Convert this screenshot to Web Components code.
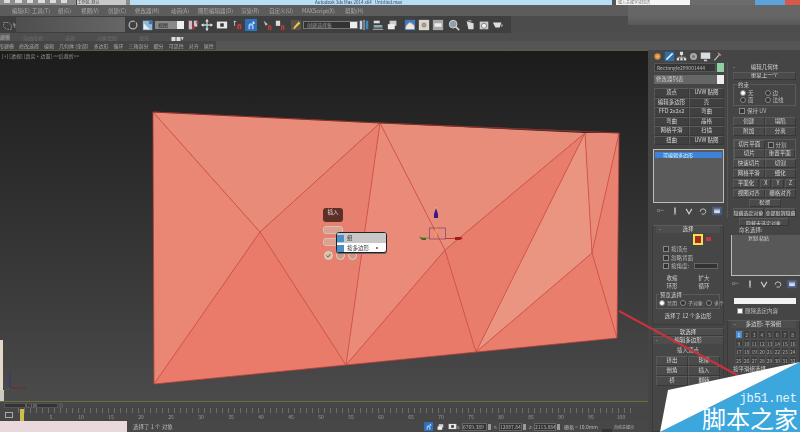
<!DOCTYPE html>
<html>
<head>
<meta charset="utf-8">
<title>3ds Max</title>
<style>
    html, body { margin: 0; padding: 0; background: #444; }
    body { width: 800px; height: 432px; overflow: hidden; font-family: "Noto Sans CJK SC", "Liberation Sans", sans-serif; color: #cfcfcf; }
    max-app { filter: blur(.35px); }
</style>
</head>
<body>
<max-app></max-app>
<jb-mark></jb-mark>

<script>
const ICONS = {
    lasso: `<path d="M2 4h6l3 3v5H5L2 9z" fill="none" stroke="#9a9a9a" stroke-dasharray="2 1"/>`,
    cursor: `<path d="M4 2l5 5-2 1 1 4-2 0-1-4-1 1z" fill="#888"/>`,
    ring: `<circle cx="7" cy="7" r="4.5" fill="none" stroke="#aaa" stroke-width="1.6"/><path d="M9 1l3 2-3 2z" fill="#444"/>`,
    blueL: `<rect x="1" y="2" width="11" height="11" fill="#8fb8d8"/><path d="M2 12V5l7 7z" fill="#e8eef2"/><rect x="8" y="2" width="4" height="4" fill="#3a7ab8"/>`,
    mirror: `<rect x="2" y="2" width="4" height="10" fill="#d8b8c8"/><rect x="8" y="2" width="4" height="7" fill="#c8c8d8"/><rect x="6" y="8" width="3" height="4" fill="#b8323a"/><circle cx="12" cy="4" r="1.4" fill="#c83a3a"/>`,
    move: `<path d="M7 1v12M1 7h12" stroke="#b8d0d8" stroke-width="1.6"/><path d="M7 0l2 3H5zM7 14l2-3H5zM0 7l3-2v4zM14 7l-3-2v4z" fill="#d8e4e8"/>`,
    view: `<rect x="1" y="3" width="12" height="8" fill="#e8e8e8"/><rect x="5" y="5" width="4" height="4" fill="#333"/>`,
    snap: `<path d="M2 3h3M3 2v6" stroke="#ccc"/><path d="M6 12V8a2.5 2.5 0 015 0v4h-2V8h-1v4z" fill="#c23a3a"/>`,
    snapB: `<rect x="0" y="0" width="14" height="14" fill="#2f6fc0"/><path d="M4 12V8a3 3 0 016 0v4H8V8H6v4z" fill="#9ac8ee"/><path d="M9 2l3 3-3 1z" fill="#dfeefa"/>`,
    snapA: `<path d="M2 2l5 4-3 2z" fill="#bbb"/><path d="M7 13V9a2 2 0 014 0v4h-1.5V9h-1v4z" fill="#c23a3a"/>`,
    snapC: `<rect x="1" y="2" width="5" height="6" fill="#ddd"/><path d="M7 13V9a2 2 0 014 0v4h-1.5V9h-1v4z" fill="#c23a3a"/>`,
    pencil: `<rect x="1" y="1" width="12" height="12" fill="#56534a"/><path d="M3 11l7-8 2 2-7 7z" fill="#e8c84a"/><path d="M3 11l1-2 1 2z" fill="#c03a3a"/>`,
    mirrorB: `<rect x="2" y="2" width="3" height="10" fill="#bcd8e8"/><rect x="9" y="2" width="3" height="10" fill="#3a8ac0"/><path d="M7 1v12" stroke="#ddd"/>`,
    align: `<rect x="2" y="2" width="7" height="3" fill="#ddd"/><rect x="2" y="7" width="10" height="3" fill="#8ab"/><path d="M1 12h12" stroke="#ccc"/>`,
    layers: `<rect x="3" y="2" width="8" height="6" fill="#ccc"/><rect x="1" y="6" width="8" height="6" fill="#eee"/>`,
    curve: `<rect x="1" y="1" width="12" height="12" fill="#3c7cc4"/><path d="M2 10c3-7 6-7 10-2v4H2z" fill="#f0e8dc"/><path d="M2 9c3-6 6-6 10-1" stroke="#d8a080" fill="none"/>`,
    mat1: `<rect x="1" y="1" width="12" height="12" fill="#d8d8d0"/><circle cx="7" cy="7" r="3" fill="#a89880"/>`,
    mat2: `<rect x="1" y="1" width="12" height="12" fill="#aaa"/><rect x="3" y="5" width="8" height="4" fill="#eee"/>`,
    mag: `<circle cx="6" cy="6" r="4.5" fill="#8e9eae" stroke="#ddd"/><path d="M9 9l4 4" stroke="#ccc" stroke-width="2"/>`,
    kettle1: `<path d="M2 3l8 2v7H4z" fill="#ddd"/><path d="M1 3l5-2 3 2z" fill="#999"/>`,
    kettle2: `<rect x="2" y="3" width="10" height="9" fill="#ccc"/><circle cx="7" cy="8" r="3" fill="#eee" stroke="#777"/>`,
    kettle3: `<path d="M1 4h10l-2 6H4z" fill="#ddd"/><path d="M11 6l2 1-2 3z" fill="#bbb"/>`,
    sun: `<circle cx="7" cy="7" r="4" fill="#d88a40"/><circle cx="7" cy="7" r="2" fill="#e8b070"/>`,
    modify: `<rect x="1" y="1" width="12" height="12" fill="#2f6fa8"/><path d="M3 11L11 3" stroke="#dfeef8" stroke-width="2"/>`,
    tree: `<rect x="5" y="1" width="4" height="4" fill="#ddd"/><rect x="1" y="9" width="3" height="3" fill="#ddd"/><rect x="5.5" y="9" width="3" height="3" fill="#ddd"/><rect x="10" y="9" width="3" height="3" fill="#ddd"/><path d="M7 5v2M2 8h10" stroke="#ccc"/>`,
    disc: `<circle cx="7" cy="7" r="4.5" fill="#aaa"/><circle cx="7" cy="7" r="2" fill="#777"/>`,
    screen: `<rect x="1" y="2" width="12" height="8" fill="#ddd"/><path d="M5 12h4" stroke="#ccc" stroke-width="2"/>`,
    hammer: `<path d="M3 12l7-8" stroke="#bbb" stroke-width="1.6"/><path d="M8 2l4 3-1 1-4-3z" fill="#c8a070"/>`,
    pin: `<path d="M2 5h3v3H2zM5 6h6" stroke="#888" fill="none"/>`,
    bar: `<path d="M7 2v9" stroke="#ccc" stroke-width="2"/><path d="M5 12h4" stroke="#888"/>`,
    vv: `<path d="M3 4l4 7 4-7" stroke="#ccc" stroke-width="1.6" fill="none"/>`,
    bin: `<path d="M3 8a4 4 0 118 0 4 4 0 01-6 3" stroke="#bbb" stroke-width="1.4" fill="none"/>`,
    cfg: `<rect x="0" y="1" width="14" height="12" rx="2" fill="#4a5c86"/><rect x="3" y="4" width="8" height="6" fill="#d8dce6"/><rect x="3" y="4" width="8" height="2" fill="#8a94ac"/>`,
    check: `<path d="M3 7l3 3 5-6" stroke="#5a6a3a" stroke-width="2" fill="none"/>`
};

class MaxIcon extends HTMLElement {
    connectedCallback() {
        const size = this.getAttribute('size') || 12;
        this.attachShadow({mode: 'open'}).innerHTML = `
        <style>
            :host { display: inline-flex; flex: none; width: ${size}px; height: ${size}px; }
            svg { width: 100%; height: 100%; display: block; }
        </style>
        <svg viewBox="0 0 14 14">${ICONS[this.getAttribute('name')] || ''}</svg>`;
    }
}
customElements.define('max-icon', MaxIcon);

class MaxBtn extends HTMLElement {
    constructor() {
        super();
        this.attachShadow({mode: 'open'}).innerHTML = `
        <style>
            :host {
                display: flex; align-items: center; justify-content: center;
                box-sizing: border-box; min-width: 0; height: 100%;
                background: #4a4a4a; border: 1px solid #383838;
                border-top-color: #5c5c5c; border-left-color: #585858;
                font-size: 5.5px; line-height: 1; color: #d4d4d4; white-space: nowrap; overflow: hidden;
            }
        </style>
        <slot></slot>`;
    }
}
customElements.define('max-btn', MaxBtn);

class MaxTitlebar extends HTMLElement {
    constructor() {
        super();
        this.attachShadow({mode: 'open'}).innerHTML = `
        <style>
            :host { display: flex; height: 5px; overflow: hidden; background: #b8def6; font-size: 4.5px; line-height: 5px; color: #30465c; }
            .quick { width: 130px; flex: none; background: #8b8b8b; display: flex; gap: 5px; padding: 0 4px; box-sizing: border-box; align-items: flex-start; }
            .quick i { width: 7px; height: 3px; background: #dcdcdc; }
            .box { width: 53px; height: 5px; margin-left: 4px; background: #c8c8c8; border-left: 1px solid #444; color: #444; font-size: 4px; line-height: 5px; white-space: nowrap; }
            .middle { flex: 1; min-width: 0; padding-left: 185px; white-space: nowrap; }
            .search { width: 78px; flex: none; background: #f4f4f4; color: #777; font-size: 4px; line-height: 5px; padding-left: 2px; box-sizing: border-box; border-left: 4px solid #555; }
            .tools { width: 65px; flex: none; background: #6c6c6c; }
            .min { width: 30px; flex: none; background: #5ba3dc; }
            .close { width: 15px; flex: none; background: #d8584a; }
        </style>
        <div class="quick"><i></i><i></i><i></i><i></i><i></i><i></i><div class="box">工作区: 默认</div></div>
        <div class="middle">Autodesk 3ds Max 2014 x64 &nbsp; Untitled.max</div>
        <div class="search">键入关键字或短语</div>
        <div class="tools"></div>
        <div class="min"></div>
        <div class="close"></div>`;
    }
}
customElements.define('max-titlebar', MaxTitlebar);

class MaxMenubar extends HTMLElement {
    constructor() {
        super();
        const items = [['编辑(E)', 20], ['工具(T)', 26], ['组(G)', 23], ['视图(V)', 27], ['创建(C)', 27], ['修改器(M)', 36], ['动画(A)', 27], ['图形编辑器(D)', 43], ['渲染(R)', 28], ['自定义(U)', 33], ['MAXScript(X)', 43], ['帮助(H)', 24]];
        this.attachShadow({mode: 'open'}).innerHTML = `
        <style>
            :host {
                display: flex; height: 11px; align-items: center; padding-left: 12px;
                background: linear-gradient(90deg, #5c5c5c 628px, #666 628px);
                font-size: 5.5px; color: #a8a8a8; white-space: nowrap;
            }
            span { flex: none; }
        </style>
        ${items.map(i => `<span style="width:${i[1]}px">${i[0]}</span>`).join('')}`;
    }
}
customElements.define('max-menubar', MaxMenubar);

class MaxToolbar extends HTMLElement {
    constructor() {
        super();
        const list = [
            ['ring', 2], ['blueL', 3], 'dd1', ['mirror', 3], ['move', 2], ['view', 3], ['snap', 4], ['snapB', 1],
            ['snapA', 5], ['snapC', 1], ['pencil', 3], 'dd2', ['mirrorB', 0], ['align', 2], ['layers', 3],
            ['curve', 5], ['mat1', 2], ['mat2', 2], ['mag', 4], ['kettle1', 5], ['kettle2', 1], ['kettle3', 2]
        ];
        const html = list.map(item => {
            if (item === 'dd1') return `<div class="dd" style="width:29px;margin-left:1px"><span>视图</span><b></b></div>`;
            if (item === 'dd2') return `<div class="dd dark" style="width:55px;margin-left:1px"><span>创建选择集</span><b></b></div>`;
            return `<max-icon name="${item[0]}" style="margin-left:${item[1]}px"></max-icon>`;
        }).join('');
        this.attachShadow({mode: 'open'}).innerHTML = `
        <style>
            :host {
                display: flex; height: 17px; align-items: center;
                background: linear-gradient(#666, #585858) 628px 0 / 172px 9px no-repeat, #4c4c4c;
            }
            .left { display: flex; align-items: center; width: 511px; height: 100%; background: #3f3f3f; flex: none; }
            .gray { width: 109px; height: 15px; background: linear-gradient(90deg, #4e4e4e, #666); flex: none; margin-left: -3px; }
            .dd { height: 8px; box-sizing: border-box; background: #888; color: #222; font-size: 5px; line-height: 8px; display: flex; justify-content: space-between; padding-left: 3px; flex: none; }
            .dd.dark { background: #333; color: #999; border: 1px solid #777; line-height: 6px; }
            .dd b { width: 7px; background: #eee; }
        </style>
        <div class="left">
            <max-icon name="lasso" style="margin-left:2px"></max-icon>
            <max-icon name="cursor" style="margin-left:-3px;width:8px"></max-icon>
            <div class="gray"></div>
            ${html}
        </div>`;
    }
}
customElements.define('max-toolbar', MaxToolbar);

class MaxRibbon extends HTMLElement {
    constructor() {
        super();
        this.attachShadow({mode: 'open'}).innerHTML = `
        <style>
            :host { display: block; height: 17px; font-size: 5px; white-space: nowrap; background: #555; }
            .tabs { display: flex; height: 8px; align-items: center; background: #4e4e4e; color: #6e6e6e; }
            .tabs span:first-child { width: 10px; height: 8px; background: #5e5e5e; color: #aaa; margin-right: 13px; line-height: 8px; flex: none; }
            .tabs span { margin-right: 22px; }
            .tabs b { color: #ddd; font-size: 5px; }
            .sub { display: flex; gap: 5px; height: 9px; align-items: center; width: 216px; background: #454545; color: #a8a8a8; box-sizing: border-box; overflow: hidden; }
            .sub span:first-child { margin-left: -11px; flex: none; }
        </style>
        <div class="tabs"><span>建模</span><span>自由形式</span><span>选择</span><span>对象绘制</span><span>填充</span><b>■■▾</b></div>
        <div class="sub"><span>多边形建模</span><span>修改选择</span><span>编辑</span><span>几何体 (全部)</span><span>多边形</span><span>循环</span><span>三角剖分</span><span>细分</span><span>可见性</span><span>对齐</span><span>属性</span></div>`;
    }
}
customElements.define('max-ribbon', MaxRibbon);

class QuadMenu extends HTMLElement {
    constructor() {
        super();
        this.attachShadow({mode: 'open'}).innerHTML = `
        <style>
            :host { position: absolute; left: 323px; top: 157px; width: 66px; height: 56px; font-size: 6px; color: #333; }
            .head { width: 20px; height: 14px; border-radius: 3px; background: #5c3028; color: #e8d8d0; font-size: 5.5px; text-align: center; line-height: 8px; }
            .chip { position: absolute; left: 0; width: 20px; height: 8px; border-radius: 3px; background: #dea08f; border: 1px solid #cfc4ba; box-sizing: border-box; }
            .dot { position: absolute; top: 43px; width: 9px; height: 9px; border-radius: 50%; background: #c99a8a; border: 1px solid #ddd2c8; box-sizing: border-box; }
            .dot.ok { background: #d8c0a8; display: flex; }
            .pop { position: absolute; left: 13px; top: 24px; width: 51px; height: 21px; box-sizing: border-box; border: 1px solid #222; border-radius: 3px; background: #fff; overflow: hidden; box-shadow: 0 1px 0 #666; }
            .row { display: flex; align-items: center; gap: 3px; height: 10px; line-height: 10px; font-size: 5.5px; }
            .row:first-child { background: #c8c8c8; }
            .row i { width: 7px; height: 7px; background: #4a90c8; flex: none; }
            .row em { width: 2px; height: 2px; border-radius: 50%; background: #c02040; margin-left: 4px; }
        </style>
        <div class="head">插入</div>
        <div class="chip" style="top:18px"></div>
        <div class="chip" style="top:30px"></div>
        <div class="dot ok" style="left:1px"><max-icon name="check" size="7"></max-icon></div>
        <div class="dot" style="left:13px"></div>
        <div class="dot" style="left:25px"></div>
        <div class="pop">
            <div class="row"><i></i><span>组</span></div>
            <div class="row"><i></i><span>按多边形</span><em></em></div>
        </div>`;
    }
}
customElements.define('quad-menu', QuadMenu);

class MaxViewport extends HTMLElement {
    constructor() {
        super();
        this.attachShadow({mode: 'open'}).innerHTML = `
        <style>
            :host {
                display: block; position: relative; height: 352px; overflow: hidden; box-sizing: border-box;
                background: linear-gradient(#1c1c1c 0%, #2a2a2a 30%, #3e3e3e 75%, #4b4b4b 100%);
                border-top: 1px solid #5c5c38; border-bottom: 1px solid #6c6c3e;
            }
            .label { position: absolute; left: 2px; top: 1px; font-size: 5px; line-height: 7px; color: #9a9a9a; white-space: nowrap; }
            svg { position: absolute; left: 0; top: -1px; }
        </style>
        <svg width="648" height="352" viewBox="0 50 648 352">
            <polygon points="153,112 380,123 260,232" fill="#e88b79"/>
            <polygon points="153,112 260,232 154,384" fill="#e98674"/>
            <polygon points="260,232 154,384 346,365" fill="#ea7a6a"/>
            <polygon points="380,123 260,232 346,365" fill="#e8806f"/>
            <polygon points="380,123 445,250 346,365" fill="#ea8a79"/>
            <polygon points="380,123 585,133 445,250" fill="#e98d7b"/>
            <polygon points="445,250 346,365 476,352" fill="#e97a6a"/>
            <polygon points="445,250 585,133 476,352" fill="#e87d6c"/>
            <polygon points="585,133 476,352 592,253" fill="#ea9482"/>
            <polygon points="585,133 619,133 592,253" fill="#e98b79"/>
            <polygon points="619,133 592,253 617,338" fill="#e98170"/>
            <polygon points="592,253 476,352 617,338" fill="#ea7e6d"/>
            <g fill="none" stroke="#d9534a" stroke-width=".9">
                <path d="M153 112L260 232L154 384M380 123L260 232L346 365L380 123L445 250L346 365"/>
                <path d="M445 250L476 352M445 250L585 133L476 352L592 253L585 133M592 253L619 133M592 253L617 338"/>
            </g>
            <path d="M154 384L153 112L380 123L619 133L617 338L346 365Z" fill="none" stroke="#b9443c" stroke-width=".8"/>
            <path d="M153 112L380 123L619 133" fill="none" stroke="#7a2c28" stroke-width=".8"/>
            <g>
                <path d="M436 226V237" stroke="#e8b050" stroke-width="1"/>
                <path d="M436 207v3" stroke="#e8c070"/>
                <path d="M436 208l2 6v4h-4v-4z" fill="#3a1a8a"/>
                <rect x="429.500" y="228" width="16" height="11" fill="none" stroke="#8a4a6a" stroke-width=".8"/>
                <path d="M420 238H429" stroke="#7a8a3a"/>
                <path d="M419 236l3 2h4v2h-4z" fill="#3a6a1a"/>
                <path d="M445 238.500H456" stroke="#b83a3a"/>
                <path d="M455 237h5l3 1-3 2h-5z" fill="#a81a1a"/>
            </g>
            <rect x="0" y="340" width="3" height="50" fill="#e6d8c8"/>
            <rect x="0" y="390" width="4" height="11" fill="#cfc8c0"/>
            <path d="M10 388V372" stroke="#3a3a7a" stroke-width="1.5"/>
            <path d="M10 388H26" stroke="#6a3030" stroke-width="1.5"/>
            <path d="M10 388l-6 3" stroke="#3f6a3f"/>
        </svg>
        <div class="label">[+] [透视] [真实 + 边面] &lt;&lt;后裁剪&gt;&gt;</div>
        <quad-menu></quad-menu>`;
    }
}
customElements.define('max-viewport', MaxViewport);

class MaxTimeline extends HTMLElement {
    constructor() {
        super();
        let labels = '';
        for (let f = 5; f <= 100; f += 5) labels += `<span>${f}</span>`;
        this.attachShadow({mode: 'open'}).innerHTML = `
        <style>
            :host { display: block; height: 19px; background: #464646; font-size: 5px; color: #999; }
            .slider { display: flex; height: 6px; align-items: center; }
            .track { margin-left: 4px; width: 54px; height: 5px; background: #333; border: 1px solid #555; box-sizing: border-box; line-height: 3px; font-size: 4px; text-align: center; color: #aaa; }
            .arrow { margin-left: 1px; width: 4px; height: 5px; background: #555; }
            .ruler { display: flex; height: 13px; }
            .tool { width: 18px; display: flex; align-items: center; justify-content: center; flex: none; }
            .tool i { width: 8px; height: 6px; border: 1px solid #aaa; box-sizing: border-box; }
            .scale {
                position: relative; flex: 1; margin-right: 22px;
                background: repeating-linear-gradient(90deg, #6c6c6c 0 1px, transparent 1px 6px) 0 0 / 100% 5px no-repeat;
                display: flex; padding-left: 18px;
            }
            .scale span { width: 30px; flex: none; text-align: center; padding-top: 6px; line-height: 6px; }
            .mark { position: absolute; left: 2px; top: 1px; width: 4px; height: 12px; background: #c8c048; }
        </style>
        <div class="slider"><div class="track">0 / 100</div><div class="arrow"></div></div>
        <div class="ruler"><div class="tool"><i></i></div><div class="scale"><div class="mark"></div>${labels}</div></div>`;
    }
}
customElements.define('max-timeline', MaxTimeline);

class MaxStatus extends HTMLElement {
    constructor() {
        super();
        const field = (label, value, w) => `<span class="axis">${label}</span><span class="field" style="width:${w}px">${value}</span><i class="spin"></i>`;
        this.attachShadow({mode: 'open'}).innerHTML = `
        <style>
            :host { display: flex; height: 11px; align-items: center; background: #474747; font-size: 5.5px; color: #b8b8b8; white-space: nowrap; overflow: hidden; }
            .script { width: 127px; height: 11px; background: #e9d9dc; flex: none; }
            .msg { width: 297px; padding-left: 6px; box-sizing: border-box; flex: none; }
            .axis { width: 5px; font-size: 4px; flex: none; }
            .field { background: #333; border: 1px solid #666; box-sizing: border-box; height: 8px; line-height: 6px; font-size: 5px; flex: none; overflow: hidden; }
            .spin { width: 3px; height: 6px; margin: 0 3px 0 1px; background: #9a9a9a; flex: none; }
            .grid { margin-left: 1px; font-size: 5px; flex: none; }
            .auto { margin-left: 4px; width: 10px; height: 3px; background: #333; align-self: flex-end; flex: none; }
            .key { margin-left: 2px; font-size: 4px; flex: none; }
        </style>
        <div class="script"></div>
        <div class="msg">选择了 1 个 对象</div>
        <max-icon name="snapB" size="9" style="margin-right:4px"></max-icon>
        <max-icon name="layers" size="8" style="margin-right:3px"></max-icon>
        <max-icon name="view" size="9" style="margin-right:0"></max-icon>
        ${field('X:', '6769.389', 25)}${field('Y:', '12087.84', 23)}${field('Z:', '2113.884', 22)}
        <span class="grid">栅格 = 10.0mm</span>
        <i class="auto"></i>
        <span class="key">自动关键点</span>`;
    }
}
customElements.define('max-status', MaxStatus);

class MaxCheck extends HTMLElement {
    constructor() {
        super();
        this.attachShadow({mode: 'open'}).innerHTML = `
        <style>
            :host { display: flex; align-items: center; gap: 2px; font-size: 5.5px; line-height: 6px; height: 6px; color: #bbb; white-space: nowrap; }
            i { width: 4px; height: 4px; border: 1px solid #888; background: #333; flex: none; }
            :host([radio]) i { border-radius: 50%; }
            :host([on]) i { background: #fff; }
        </style>
        <i></i><slot></slot>`;
    }
}
customElements.define('max-check', MaxCheck);

class MaxRollout extends HTMLElement {
    constructor() {
        super();
        this.attachShadow({mode: 'open'}).innerHTML = `
        <style>
            :host { display: block; box-sizing: border-box; background: #464646; border: 1px solid #3a3a3a; border-top-color: #5a5a5a; }
            .head { height: 7px; line-height: 7px; text-align: center; font-size: 5.5px; color: #d8d8d8; position: relative; background: #4d4d4d; }
            .head::before { content: '-'; position: absolute; left: 3px; color: #aaa; }
            :host([closed]) .head::before { content: '+'; }
        </style>
        <div class="head">${this.getAttribute('title') || ''}</div>
        <slot></slot>`;
    }
}
customElements.define('max-rollout', MaxRollout);

class ColumnModify extends HTMLElement {
    constructor() {
        super();
        const tabs = ['sun', 'modify', 'tree', 'disc', 'screen', 'hammer'];
        const stack = [['顶点', 'UVW 贴图'], ['编辑多边形', '壳'], ['FFD 2x2x2', '弯曲'], ['弯曲', '晶格'], ['网格平滑', '扫描'], ['扭曲', 'UVW 贴图']];
        this.attachShadow({mode: 'open'}).innerHTML = `
        <style>
            :host { display: flex; flex-direction: column; width: 74px; flex: none; font-size: 6px; }
            .tabs { display: flex; gap: 1px; height: 12px; align-items: center; margin: 0 0 1px 2px; }
            .tabs max-icon { width: 11px; height: 11px; }
            .name { display: flex; gap: 1px; height: 9px; margin: 0 0 3px 4px; }
            .name div { flex: 1; background: #363636; font-size: 5px; line-height: 7px; color: #bbb; padding-left: 2px; border: 1px solid #555; box-sizing: border-box; overflow: hidden; white-space: nowrap; }
            .name i { width: 7px; background: #8bd1a4; flex: none; }
            .drop { display: flex; justify-content: space-between; height: 9px; margin: 0 0 4px 4px; background: #666; font-size: 5.5px; line-height: 9px; padding-left: 2px; color: #ccc; }
            .drop b { width: 7px; background: #eee; }
            .stack { display: grid; grid-template-columns: 1fr 1fr; grid-auto-rows: 9.500px; margin: 0 0 4px 4px; }
            .stack max-btn { background: #404040; }
            .list { margin: 0 0 3px 3px; height: 54px; box-sizing: border-box; border: 1px solid #bcbcbc; background: #5a5a5a; padding: 2px 1px 0; }
            .list div { height: 6px; background: #3d82d8; font-size: 5px; line-height: 6px; color: #dfe; padding-left: 8px; }
            .icons { display: flex; justify-content: center; gap: 4px; height: 10px; margin-bottom: 9px; align-items: center; padding-left: 4px; }
            .icons max-icon { width: 10px; height: 10px; }
            .sel { margin-left: 2px; height: 100px; padding: 0 3px; flex: none; }
            .mode { display: flex; align-items: center; height: 12px; }
            .mode i { width: 6px; height: 7px; background: #a82a20; border: 2px solid #f2e04e; margin-left: 37px; }
            .mode b { width: 5px; height: 4px; background: #c03a3a; margin-left: 3px; }
            .rows { display: grid; gap: 2.500px; padding: 1px 0 0 7px; }
            .spin { display: flex; gap: 2px; height: 6px; }
            .spin span { flex: 1; margin-left: 3px; height: 6px; box-sizing: border-box; background: #333; border: 1px solid #666; margin-right: 2px; }
            .two { display: grid; grid-template-columns: 1fr 1fr; grid-auto-rows: 8px; margin-top: 5px; font-size: 5.500px; line-height: 8px; text-align: center; color: #ccc; }
            .group { margin-top: 4px; border: 1px solid #5a5a5a; height: 15px; position: relative; box-sizing: border-box; }
            .group em { position: absolute; left: 2px; top: -3px; font-style: normal; background: #464646; font-size: 5.500px; line-height: 6px; padding: 0 1px; }
            .group div { display: flex; gap: 3px; padding: 5px 0 0 2px; }
            .group max-check { font-size: 5px; }
            .count { text-align: center; font-size: 5.500px; line-height: 8px; padding-top: 3px; color: #ccc; }
            .edit { margin: 0 0 0 2px; flex: 1; }
            .ins { text-align: center; font-size: 5.500px; line-height: 12px; color: #ccc; }
            .ed { display: grid; grid-template-columns: 1fr 1fr; grid-auto-rows: 10px; padding: 0 3px; }
        </style>
        <div class="tabs">${tabs.map(t => `<max-icon name="${t}"></max-icon>`).join('')}</div>
        <div class="name"><div>Rectangle299001444</div><i></i></div>
        <div class="drop">修改器列表<b></b></div>
        <div class="stack">${stack.map(r => r.map(t => `<max-btn>${t}</max-btn>`).join('')).join('')}</div>
        <div class="list"><div>可编辑多边形</div></div>
        <div class="icons"><max-icon name="pin"></max-icon><max-icon name="bar"></max-icon><max-icon name="vv"></max-icon><max-icon name="bin"></max-icon><max-icon name="cfg"></max-icon></div>
        <max-rollout class="sel" title="选择">
            <div class="mode"><i></i><b></b></div>
            <div class="rows">
                <max-check>按顶点</max-check>
                <max-check>忽略背面</max-check>
                <div class="spin"><max-check>按角度:</max-check><span></span></div>
            </div>
            <div class="two"><span>收缩</span><span>扩大</span><span>环形</span><span>循环</span></div>
            <div class="group"><em>预览选择</em><div><max-check radio on>禁用</max-check><max-check radio>子对象</max-check><max-check radio>多个</max-check></div></div>
            <div class="count">选择了 12 个多边形</div>
        </max-rollout>
        <max-rollout class="edit" closed title="软选择" style="flex:none;height:8px;margin-top:3px;overflow:hidden"></max-rollout>
        <max-rollout class="edit" title="编辑多边形">
            <div class="ins">插入顶点</div>
            <div class="ed"><max-btn>挤出</max-btn><max-btn>轮廓</max-btn><max-btn>倒角</max-btn><max-btn>插入</max-btn><max-btn>桥</max-btn><max-btn>翻转</max-btn></div>
        </max-rollout>`;
    }
}
customElements.define('column-modify', ColumnModify);

class ColumnGeometry extends HTMLElement {
    constructor() {
        super();
        let numbers = '';
        for (let n = 1; n <= 32; n++) numbers += `<span class="${n === 1 ? 'on' : ''}">${n}</span>`;
        this.attachShadow({mode: 'open'}).innerHTML = `
        <style>
            :host { display: flex; flex-direction: column; width: 73px; flex: none; margin-top: 12px; margin-left: 3px; font-size: 5.500px; color: #ccc; }
            .roll { padding: 1px 4px 0 5px; box-sizing: border-box; border-left: 1px solid #555; }
            .t { height: 8px; line-height: 8px; text-align: center; margin-bottom: 1px; position: relative; }
            .t::before { content: '-'; position: absolute; left: 0; color: #aaa; }
            .row { display: grid; grid-template-columns: 1fr 1fr; height: 9px; margin-bottom: 1px; }
            .one { height: 8px; }
            .group { position: relative; border: 1px solid #5a5a5a; padding: 5px 6px 2px; height: 22px; box-sizing: border-box; margin: 4px 0 1px; display: grid; grid-template-columns: 1fr 1fr; align-content: space-around; }
            .group em { position: absolute; left: 3px; top: -3px; font-style: normal; background: #454545; line-height: 6px; padding: 0 1px; }
            .keep { height: 8px; margin: 0 0 2px 6px; }
            .slice { border: 1px solid #5a5a5a; margin-top: 3px; }
            .slice .row { margin: 0; }
            .xyz { display: flex; height: 9px; margin-bottom: 1px; gap: 1px; }
            .xyz max-btn:first-child { flex: 2.600; }
            .xyz max-btn { flex: 1; }
            p { margin: 0; font-size: 5.500px; line-height: 7px; height: 8px; padding-left: 12px; }
            .sets { height: 41px; box-sizing: border-box; margin-left: 4px; border-left: 1px solid #bcbcbc; border-bottom: 1px solid #bcbcbc; background: #585858; padding-left: 16px; font-size: 5px; line-height: 6px; }
            .icons { display: flex; justify-content: center; gap: 4px; height: 10px; margin: 3px 0 9px; align-items: center; }
            .icons max-icon { width: 10px; height: 10px; }
            .white { height: 6px; flex: none; margin: 0 4px 4px 7px; background: #f2f2f2; }
            .del { margin: 0 0 6px 10px; }
            .smooth { flex: 1; padding: 0 3px; }
            .nums { display: grid; grid-template-columns: repeat(8, 7.700px); grid-auto-rows: 8.700px; padding: 2px 0 0 4px; font-size: 5px; text-align: center; line-height: 8px; color: #aaa; }
            .nums span { background: #3e3e3e; border: .5px solid #4c4c4c; box-sizing: border-box; }
            .nums .on { background: #4b8ed0; color: #fff; }
            .by { font-size: 5.500px; line-height: 8px; padding-left: 2px; }
        </style>
        <div class="roll">
            <div class="t">编辑几何体</div>
            <max-btn style="height:8px">重复上一个</max-btn>
            <div class="group"><em>约束</em><max-check radio on>无</max-check><max-check radio>边</max-check><max-check radio>面</max-check><max-check radio>法线</max-check></div>
            <max-check class="keep">保持 UV</max-check>
            <div class="row"><max-btn>创建</max-btn><max-btn>塌陷</max-btn></div>
            <div class="row" style="margin:0"><max-btn>附加</max-btn><max-btn>分离</max-btn></div>
            <div class="slice">
                <div class="row"><max-btn>切片平面</max-btn><max-check style="padding-left:3px;height:9px">分割</max-check></div>
                <div class="row"><max-btn>切片</max-btn><max-btn>重置平面</max-btn></div>
            </div>
            <div class="row"><max-btn>快速切片</max-btn><max-btn>切割</max-btn></div>
            <div class="row"><max-btn>网格平滑</max-btn><max-btn>细化</max-btn></div>
            <div class="xyz"><max-btn>平面化</max-btn><max-btn>X</max-btn><max-btn>Y</max-btn><max-btn>Z</max-btn></div>
            <div class="row"><max-btn>视图对齐</max-btn><max-btn>栅格对齐</max-btn></div>
            <max-btn class="one" style="width:32px;margin:0 auto 1px">松弛</max-btn>
            <div class="row" style="gap:1px"><max-btn style="font-size:5px">隐藏选定对象</max-btn><max-btn style="font-size:5px">全部取消隐藏</max-btn></div>
        </div>
        <max-btn class="one" style="width:50px;margin:0 auto 1px;flex:none;font-size:5px">隐藏未选定对象</max-btn>
        <p>命名选择:</p>
        <div class="sets">复制 粘贴</div>
        <div class="icons"><max-icon name="pin"></max-icon><max-icon name="bar"></max-icon><max-icon name="vv"></max-icon><max-icon name="bin"></max-icon><max-icon name="cfg"></max-icon></div>
        <div class="white"></div>
        <max-check class="del" on>删除选定内容</max-check>
        <max-rollout class="smooth" title="多边形: 平滑组">
            <div class="nums">${numbers}</div>
            <div class="by">按平滑组选择</div>
        </max-rollout>`;
    }
}
customElements.define('column-geometry', ColumnGeometry);

class JbMark extends HTMLElement {
    constructor() {
        super();
        this.attachShadow({mode: 'open'}).innerHTML = `
        <style>
            :host { position: absolute; left: 660px; top: 362px; width: 140px; height: 70px; color: #fff; }
            svg { position: absolute; left: 0; top: 0; }
            .url { position: absolute; right: 3px; top: 30px; font-family: "Liberation Mono", monospace; font-size: 12px; line-height: 14px; color: #e8f6ff; white-space: nowrap; }
            .cn { position: absolute; right: 2px; top: 44px; font-family: "Noto Sans CJK SC", sans-serif; font-size: 24px; line-height: 24px; white-space: nowrap; }
        </style>
        <svg width="140" height="70" viewBox="0 0 140 70">
            <polygon points="0,70 140,0 140,70" fill="#3ba7dd"/>
            <polygon points="8,28 140,0 0,70" fill="#fff"/>
        </svg>
        <div class="url">jb51.net</div>
        <div class="cn">脚本之家</div>`;
    }
}
customElements.define('jb-mark', JbMark);

class MaxApp extends HTMLElement {
    constructor() {
        super();
        this.attachShadow({mode: 'open'}).innerHTML = `
        <style>
            :host { display: flex; flex-direction: column; width: 800px; height: 432px; overflow: hidden; position: relative; background: #464646; }
            .main { display: grid; grid-template-columns: 648px 152px; flex: 1; min-height: 0; }
            .left { display: flex; flex-direction: column; min-width: 0; }
            .panel { display: flex; background: #454545; height: 382px; overflow: hidden; padding-left: 2px; box-sizing: border-box; }
            .arrow { position: absolute; left: 610px; top: 300px; pointer-events: none; }
        </style>
        <max-titlebar></max-titlebar>
        <max-menubar></max-menubar>
        <max-toolbar></max-toolbar>
        <max-ribbon></max-ribbon>
        <div class="main">
            <div class="left">
                <max-viewport></max-viewport>
                <max-timeline></max-timeline>
                <max-status></max-status>
            </div>
            <div class="panel">
                <column-modify></column-modify>
                <column-geometry></column-geometry>
            </div>
        </div>
        <svg class="arrow" width="190" height="110" viewBox="610 300 190 110"><path d="M619 311L772 394" stroke="#c8323c" stroke-width="2"/></svg>`;
    }
}
customElements.define('max-app', MaxApp);
</script>
</body>
</html>
